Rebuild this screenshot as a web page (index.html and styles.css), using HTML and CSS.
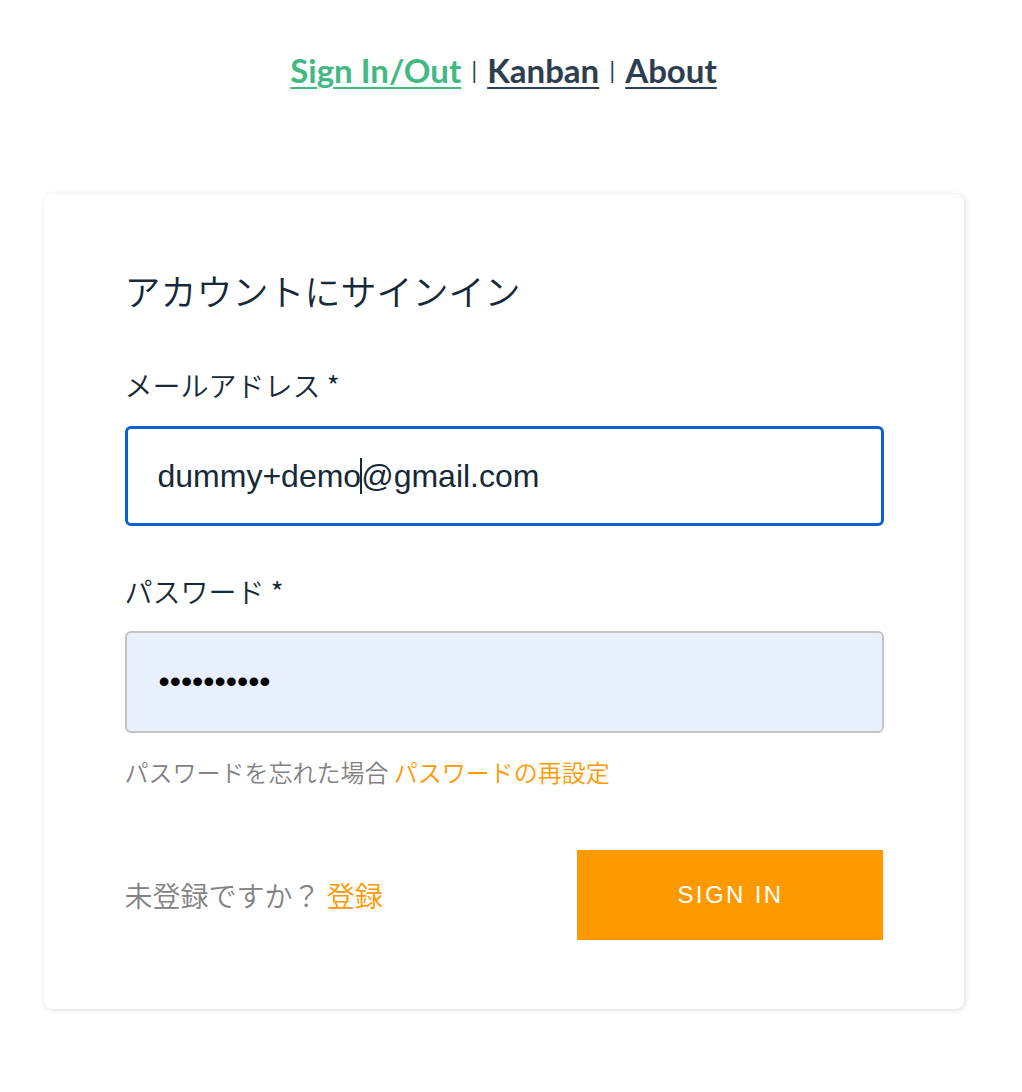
FILE: index.html
```html
<!DOCTYPE html>
<html lang="ja">
<head>
<meta charset="utf-8">
<title>Sign In</title>
<link rel="stylesheet" href="styles.css">
</head>
<body>
<div class="page">
  <nav class="nav">
    <a class="nav-link active" href="#">Sign In/Out</a><span class="sep">|</span><a class="nav-link" href="#">Kanban</a><span class="sep">|</span><a class="nav-link" href="#">About</a>
  </nav>
  <div class="card">
    <h1 class="title">アカウントにサインイン</h1>
    <div class="label">メールアドレス *</div>
    <div class="field field-focus"><span class="val">dummy+demo</span><span class="caret"></span><span class="val">@gmail.com</span></div>
    <div class="label label-2">パスワード *</div>
    <div class="field field-auto"><span class="dots">••••••••••</span></div>
    <div class="hint">パスワードを忘れた場合 <a href="#" class="link">パスワードの再設定</a></div>
    <div class="footer">
      <div class="signup">未登録ですか？ <a href="#" class="link">登録</a></div>
      <button class="btn">SIGN IN</button>
    </div>
  </div>
</div>
</body>
</html>
```

FILE: styles.css
```css
html, body {
  margin: 0;
  padding: 0;
  background: #fff;
}
.page {
  width: 1007px;
  display: flex;
  flex-direction: column;
  align-items: center;
  padding-bottom: 40px;
}
.nav {
  padding-top: 50px;
  height: 40px;
  font-family: Lato, "Liberation Sans", sans-serif;
  font-weight: 700;
  font-size: 33px;
  line-height: 40px;
  color: #2c3e50;
}
.nav-link {
  color: #2c3e50;
  text-decoration: underline;
  text-decoration-thickness: 2px;
  text-underline-offset: 4px;
}
.nav-link.active {
  color: #42b983;
}
.sep {
  font-weight: 400;
  font-size: 24px;
  margin: 0 10px;
  position: relative;
  top: -4px;
}
.card {
  margin-top: 104px;
  width: 920px;
  box-sizing: border-box;
  padding: 74px 80px 69px 81px;
  background: #fff;
  border-radius: 8px;
  box-shadow: 1px 1px 5px 0 rgba(0, 0, 0, 0.15);
  display: flex;
  flex-direction: column;
  font-family: "Noto Sans CJK JP", "Liberation Sans", sans-serif;
  font-weight: 350;
  color: #152939;
}
.title {
  margin: 0;
  font-size: 36px;
  line-height: 44px;
  font-weight: 350;
}
.label {
  margin-top: 53px;
  font-size: 28px;
  line-height: 40px;
}
.label-2 {
  margin-top: 45px;
}
.field {
  margin-top: 21px;
  height: 100px;
  box-sizing: border-box;
  border-radius: 6px;
  display: flex;
  align-items: center;
  font-family: "Liberation Sans", Arial, sans-serif;
  font-weight: 400;
  font-size: 32px;
}
.field-focus {
  border: 3px solid #0b60d0;
  padding-left: 30px;
}
.field-auto {
  margin-top: 20px;
  height: 102px;
  border: 2px solid #c4c4c4;
  background: #e8f0fe;
  padding-left: 32px;
}
.val {
  color: #152939;
}
.caret {
  width: 2px;
  height: 36px;
  background: #152939;
  margin: 0 -1px;
}
.dots {
  color: #000;
  font-size: 32px;
  position: relative;
  top: -1px;
}
.hint {
  margin-top: 23px;
  font-size: 24px;
  line-height: 32px;
  color: #828282;
}
.link {
  color: #ff9900;
  text-decoration: none;
}
.footer {
  margin-top: 62px;
  display: flex;
  justify-content: space-between;
  align-items: center;
}
.signup {
  font-size: 28px;
  line-height: 40px;
  color: #828282;
}
.btn {
  width: 306px;
  height: 90px;
  border: none;
  border-radius: 0;
  background: #ff9900;
  color: #fff;
  font-family: "Liberation Sans", Arial, sans-serif;
  font-size: 24px;
  letter-spacing: 2.4px;
  padding: 0 0 0 2px;
  margin-right: 1px;
}
```
